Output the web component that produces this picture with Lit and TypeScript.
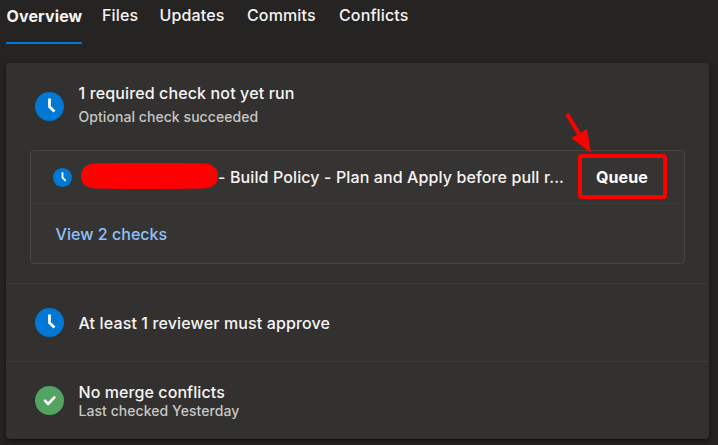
import { LitElement, html, css } from "lit";
import { customElement, property } from "lit/decorators.js";

@customElement("status-icon")
class StatusIcon extends LitElement {
  @property() kind = "clock";

  static styles = css`
    :host { display: block; flex: none; width: 29px; height: 29px; }
    svg { display: block; width: 100%; height: 100%; }
    .blue { fill: #0078d4; }
    .green { fill: #55a362; }
    .mark { fill: none; stroke: #fff; stroke-width: 2.6; stroke-linecap: round; stroke-linejoin: round; }
    .hands { stroke-width: 2.8; stroke-linecap: butt; }
  `;

  render() {
    return this.kind === "check"
      ? html`<svg viewBox="0 0 29 29"><circle class="green" cx="14.5" cy="14.5" r="14.5"/><path class="mark" d="M10 14.7l3.1 3.3 6.3-6.6"/></svg>`
      : html`<svg viewBox="0 0 29 29"><circle class="blue" cx="14.5" cy="14.5" r="14.5"/><path class="mark hands" d="M14.5 6.6v8.2l5 4.8"/></svg>`;
  }
}

@customElement("app-root")
class AppRoot extends LitElement {
  static styles = css`
    :host {
      display: block; box-sizing: border-box; height: 445px; overflow: hidden;
      background: #252423; color: #f6f5f4;
      font: 500 16px/20px Inter, "Liberation Sans", sans-serif;
      letter-spacing: .13px;
      white-space: nowrap;
    }
    * { box-sizing: border-box; }
    .tabs { display: grid; grid-template-columns: 96px 57.5px 87.5px 92px auto; justify-items: start; height: 63px; padding-left: 6px; }
    .tab { height: 44px; padding-top: 5px; }
    .active { width: 76px; border-bottom: 2px solid #0078d4; font-weight: 700; padding: 6px 0 0 .5px; }
    .card {
      width: 703px; height: 376px; margin-left: 6px; background: #323130; border-radius: 4px;
      box-shadow: 0 3px 7px rgba(0,0,0,.4), 0 1px 2px rgba(0,0,0,.3);
    }
    .policy { border-bottom: 1px solid #3d3b3a; }
    .row { display: flex; align-items: center; gap: 14.5px; padding-left: 29px; }
    .first { height: 87px; }
    .first .copy { margin-top: -4px; }
    .middle { height: 78px; }
    .last { height: 77px; padding-bottom: 1px; }
    .last .copy { margin-top: 2px; letter-spacing: .08px; }
    .sub { font-size: 14px; line-height: 18px; color: #c8c6c4; letter-spacing: .06px; }
    .first .sub { margin-top: 5px; }
    .checks { width: 655px; height: 114px; margin: 0 0 19px 24px; border: 1px solid #484644; border-radius: 4px; background: #363432; }
    .check { display: flex; align-items: center; height: 53px; padding-left: 22px; border-bottom: 1px solid #3d3b3a; }
    .small { width: 19px; height: 19px; }
    .redaction { width: 137px; height: 26px; margin: 0 0 2px 9px; flex: none; display: block; }
    .name { width: 347px; letter-spacing: .115px; }
    .queue {
      display: flex; align-items: center; justify-content: center; position: relative;
      width: 89px; height: 45px; margin: 0 0 2px 13px; padding: 1px 1px 0 0;
      border: 4px solid #f00; border-radius: 4px;
      font-weight: 700; color: #fff;
    }
    .arrow { position: absolute; left: -20px; top: -49px; width: 30px; height: 44px; }
    .view { display: flex; align-items: center; height: 60px; padding-left: 24.5px; color: #8fc1ff; letter-spacing: .04px; }
  `;

  render() {
    return html`
      <nav class="tabs">
        <div class="tab active">Overview</div>
        <div class="tab">Files</div>
        <div class="tab">Updates</div>
        <div class="tab">Commits</div>
        <div class="tab">Conflicts</div>
      </nav>
      <main class="card">
        <section class="policy">
          <div class="row first">
            <status-icon></status-icon>
            <div class="copy"><div>1 required check not yet run</div><div class="sub">Optional check succeeded</div></div>
          </div>
          <div class="checks">
            <div class="check">
              <status-icon class="small"></status-icon>
              <svg class="redaction" viewBox="0 0 137 26"><path fill="#f00" d="M14 .6Q68-.8 123 .6C132 1 137 6 137 13S132 25 123 25.4Q68 26.8 14 25.4C5 25 0 20 0 13S5 1 14 .6Z"/></svg>
              <div class="name">- Build Policy - Plan and Apply before pull r...</div>
              <div class="queue">
                Queue
                <svg class="arrow" viewBox="0 0 30 44"><path d="M5 5L17 25" stroke="#f00" stroke-width="4"/><path fill="#f00" d="M9.5 29L25 20 29 44Z"/></svg>
              </div>
            </div>
            <div class="view">View 2 checks</div>
          </div>
        </section>
        <section class="policy row middle">
          <status-icon></status-icon><div>At least 1 reviewer must approve</div>
        </section>
        <section class="row last">
          <status-icon kind="check"></status-icon>
          <div class="copy"><div>No merge conflicts</div><div class="sub">Last checked Yesterday</div></div>
        </section>
      </main>
    `;
  }
}
